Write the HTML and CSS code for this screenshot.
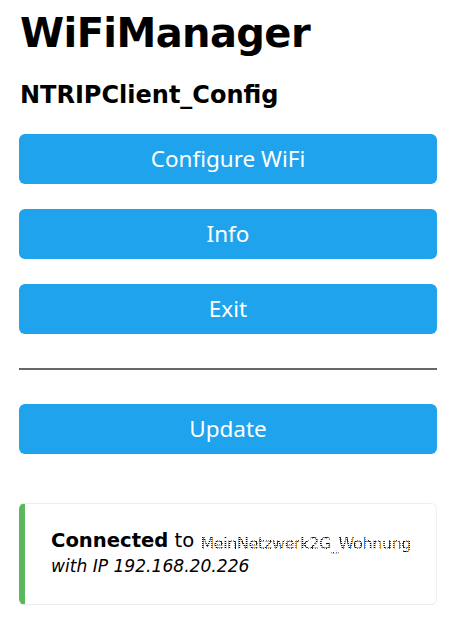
FILE: index.html
```html
<!DOCTYPE html>
<html>
<head>
<meta charset="utf-8">
<link rel="stylesheet" href="styles.css">
<title>WiFiManager</title>
</head>
<body>
<div class="wrap">
  <h1 class="title">WiFiManager</h1>
  <h3 class="subtitle">NTRIPClient_Config</h3>
  <div class="menu">
    <button class="btn">Configure WiFi</button>
    <button class="btn">Info</button>
    <button class="btn">Exit</button>
  </div>
  <hr class="sep">
  <button class="btn">Update</button>
  <div class="msg">
    <div class="line"><strong>Connected</strong> to <span class="ssid">MeinNetzwerk2G_Wohnung</span></div>
    <div class="line"><em>with IP 192.168.20.226</em></div>
  </div>
</div>
</body>
</html>
```

FILE: styles.css
```css
html, body {
  margin: 0;
  padding: 0;
  background: #fff;
}
body {
  font-family: "DejaVu Sans", Verdana, sans-serif;
  color: #000;
}
.wrap {
  padding: 0 20px 0 19px;
  display: flex;
  flex-direction: column;
}
.title {
  font-size: 40px;
  font-weight: bold;
  letter-spacing: -0.6px;
  line-height: 1;
  margin: 13px 0 0 1px;
}
.subtitle {
  font-size: 24px;
  font-weight: bold;
  line-height: 1;
  margin: 30px 0 0 1px;
}
.menu {
  display: flex;
  flex-direction: column;
  gap: 25px;
  margin-top: 27px;
}
.btn {
  display: block;
  width: 100%;
  height: 50px;
  border: 0;
  border-radius: 6px;
  background: #1fa3ec;
  color: #fff;
  font-family: "Noto Sans", "Open Sans", sans-serif;
  font-size: 22.5px;
  line-height: 50px;
  padding: 0;
  cursor: pointer;
}
.sep {
  margin: 34px 0 34px 0;
  height: 0;
  border: 0;
  border-top: 2px solid #666;
}
.msg {
  margin-top: 49px;
  border: 1px solid #eee;
  border-left: 6px solid #5cb85c;
  border-radius: 6px;
  padding: 25px 26px 25px 26px;
  font-size: 19.6px;
  line-height: 23.5px;
}
.line {
  white-space: nowrap;
}
.msg em {
  font-size: 17.1px;
}
.ssid {
  display: inline-block;
  vertical-align: -2px;
  color: transparent;
  background-image:
    repeating-linear-gradient(90deg, #222 0 1px, transparent 1px 3px, #3a7bd5 3px 4px, transparent 4px 5px, #e08a2c 5px 6px, transparent 6px 7px),
    repeating-linear-gradient(0deg, #000 0 1px, transparent 1px 2px);
  -webkit-background-clip: text;
  background-clip: text;
  letter-spacing: -0.4px;
  font-size: 16px;
  line-height: 20px;
}
```
